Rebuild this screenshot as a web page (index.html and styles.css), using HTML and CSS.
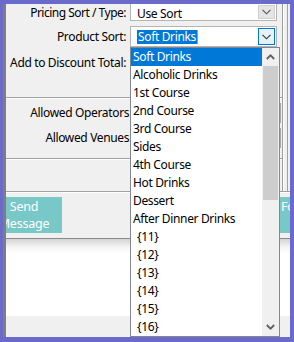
FILE: index.html
```html
<!DOCTYPE html>
<html>
<head>
<meta charset="utf-8">
<link rel="stylesheet" href="styles.css">
</head>
<body>
<div class="window">
  <div class="top">
    <div class="form">
      <div class="sec sec1">
        <div class="rows">
          <div class="row r1">
            <span class="label tight">Pricing Sort / Type:</span>
            <div class="combo">
              <span class="ctext">Use Sort</span>
              <span class="cbtn"><svg width="9" height="6" viewBox="0 0 9 6"><path d="M0.5 0.8 L4.5 4.8 L8.5 0.8" fill="none" stroke="#555" stroke-width="1.1"/></svg></span>
            </div>
          </div>
          <div class="row r2">
            <span class="label">Product Sort:</span>
            <div class="combo focus">
              <span class="ctext"><span class="sel">Soft Drinks</span><span class="caret"></span></span>
              <span class="cbtn blue"><svg width="9" height="6" viewBox="0 0 9 6"><path d="M0.5 0.8 L4.5 4.8 L8.5 0.8" fill="none" stroke="#333" stroke-width="1.1"/></svg></span>
            </div>
          </div>
          <div class="row r3">
            <span class="label">Add to Discount Total:</span>
          </div>
        </div>
      </div>
      <div class="sep"></div>
      <div class="sec sec2">
        <div class="row r4">
          <span class="label wide">Allowed Operators:</span>
          <div class="field"></div>
        </div>
        <div class="row r5">
          <span class="label wide">Allowed Venues:</span>
          <div class="field"></div>
        </div>
      </div>
      <div class="sep"></div>
      <div class="sec sec3"></div>
    </div>
    <div class="rail"></div>
  </div>
  <div class="sep full"></div>
  <div class="btnrow">
    <div class="tbtn left"><span>Send</span><span>Message</span></div>
    <div class="tbtn right"><span>Forward</span></div>
  </div>
  <div class="hline"></div>
  <div class="whitearea"></div>
  <div class="grayarea"></div>

  <div class="dropdown">
    <ul class="items">
      <li class="hi">Soft Drinks</li>
      <li>Alcoholic Drinks</li>
      <li>1st Course</li>
      <li>2nd Course</li>
      <li>3rd Course</li>
      <li>Sides</li>
      <li>4th Course</li>
      <li>Hot Drinks</li>
      <li>Dessert</li>
      <li>After Dinner Drinks</li>
      <li class="ph">{11}</li>
      <li class="ph">{12}</li>
      <li class="ph">{13}</li>
      <li class="ph">{14}</li>
      <li class="ph">{15}</li>
      <li class="ph">{16}</li>
    </ul>
    <div class="scrollbar">
      <div class="arrow"><svg width="9" height="6" viewBox="0 0 9 6"><path d="M0.8 5 L4.5 1.3 L8.2 5" fill="none" stroke="#606060" stroke-width="1.8"/></svg></div>
      <div class="thumb"></div>
      <div class="track"></div>
      <div class="arrow"><svg width="9" height="6" viewBox="0 0 9 6"><path d="M0.8 1 L4.5 4.7 L8.2 1" fill="none" stroke="#606060" stroke-width="1.8"/></svg></div>
    </div>
  </div>
</div>
</body>
</html>
```

FILE: styles.css
```css
html, body {
  margin: 0;
  padding: 0;
}
body {
  background: #6a6acb;
  width: 294px;
  height: 342px;
  overflow: hidden;
  font-family: "Noto Sans", "DejaVu Sans", sans-serif;
  font-size: 12px;
  letter-spacing: -0.35px;
  color: #000;
}
.window {
  position: relative;
  margin: 4px 0 0 3px;
  width: 284px;
  height: 333px;
  border-left: 3px solid #999;
  border-image: linear-gradient(to right, #7d7d85, #c4c4c8 60%, #e6e6e6) 1;
  background: #f0f0f0;
  overflow: hidden;
  display: flex;
  flex-direction: column;
}
.top {
  display: flex;
}
.form {
  width: 276px;
  display: flex;
  flex-direction: column;
}
.rail {
  width: 8px;
  background: linear-gradient(to right, #a0a0a0 0 1px, #ffffff 1px 2px, transparent 2px 5px, #a0a0a0 5px 6px, transparent 6px);
}
.sec1 {
  height: 93px;
}
.rows {
  margin-top: -3px;
  display: flex;
  flex-direction: column;
  gap: 5px;
}
.row {
  display: flex;
  align-items: center;
  gap: 4px;
}
.label {
  width: 120px;
  flex: none;
  text-align: right;
  white-space: nowrap;
  line-height: 16px;
}
.label.tight {
  letter-spacing: -0.5px;
}
.label.wide {
  width: 126px;
  margin-right: -6px;
}
.r1 { height: 20px; }
.r2 { height: 21px; }
.r3 { height: 21px; }
.r1 .label { margin-top: 4px; }
.combo {
  width: 147px;
  height: 100%;
  box-sizing: border-box;
  border: 1px solid #b4b4b4;
  background: #fff;
  display: flex;
  align-items: center;
  justify-content: space-between;
  padding: 0 1px 0 6px;
}
.r1 .combo { padding-top: 4px; }
.ctext {
  line-height: 15px;
  display: flex;
  align-items: center;
}
.sel {
  background: #0078d7;
  color: #fff;
  padding: 0 1px;
  line-height: 14px;
  height: 14px;
}
.caret {
  width: 1px;
  height: 14px;
  background: #e08a3a;
}
.cbtn {
  width: 17px;
  height: 14px;
  box-sizing: border-box;
  background: #e5e5e5;
  border: 1px solid #d0d0d0;
  display: flex;
  align-items: center;
  justify-content: center;
}
.r1 .cbtn { margin-top: -3px; }
.cbtn.blue {
  height: 17px;
  background: #e5f1fb;
  border-color: #0078d7;
}
.sep {
  height: 0;
  border-top: 1px solid #a0a0a0;
  border-bottom: 1px solid #ffffff;
}
.sec2 {
  height: 59px;
  box-sizing: border-box;
  padding-top: 4px;
  display: flex;
  flex-direction: column;
  gap: 5px;
}
.r4, .r5 { height: 20px; }
.field {
  width: 151px;
  height: 20px;
  box-sizing: border-box;
  border: 1px solid #a8a8a8;
  background: #f4f4f4;
  box-shadow: inset 1px 1px 0 #fff;
}
.sec3 {
  height: 31px;
}
.btnrow {
  height: 45px;
  box-sizing: border-box;
  padding-top: 4px;
  display: flex;
  justify-content: space-between;
}
.tbtn {
  height: 36px;
  box-sizing: border-box;
  background: #78c8c8;
  color: #fff;
  display: flex;
  flex-direction: column;
  align-items: center;
  justify-content: center;
  line-height: 17px;
  font-size: 12.5px;
  letter-spacing: -0.2px;
}
.tbtn.left {
  width: 60px;
  padding-right: 16px;
  margin-left: -4px;
}
.tbtn.right {
  width: 60px;
  margin-right: -50px;
  align-items: flex-start;
  justify-content: flex-start;
  padding-left: 1px;
  padding-top: 1px;
}
.hline {
  height: 1px;
  background: #8a8a8a;
}
.whitearea {
  height: 77px;
  background: linear-gradient(to bottom, #d4d4d4 0, #f4f4f4 8px, #ffffff 14px);
}
.grayarea {
  height: 21px;
  background: #f0f0f0;
}
.dropdown {
  position: absolute;
  left: 124px;
  top: 43px;
  width: 150px;
  height: 290px;
  box-sizing: border-box;
  border: 1px solid #828790;
  background: #fff;
  display: flex;
}
.items {
  list-style: none;
  margin: 0;
  padding: 0;
  width: 131px;
  flex: none;
}
.items li {
  height: 18px;
  line-height: 18px;
  padding-left: 2px;
  white-space: nowrap;
}
.items li.hi {
  background: #0078d7;
  color: #fff;
}
.items li.ph {
  padding-left: 6px;
}
.scrollbar {
  width: 17px;
  background: #f0f0f0;
  display: flex;
  flex-direction: column;
}
.arrow {
  height: 18px;
  display: flex;
  align-items: center;
  justify-content: center;
}
.thumb {
  height: 134px;
  margin: 0 1px;
  background: #cdcdcd;
}
.track {
  flex: 1;
}
```
